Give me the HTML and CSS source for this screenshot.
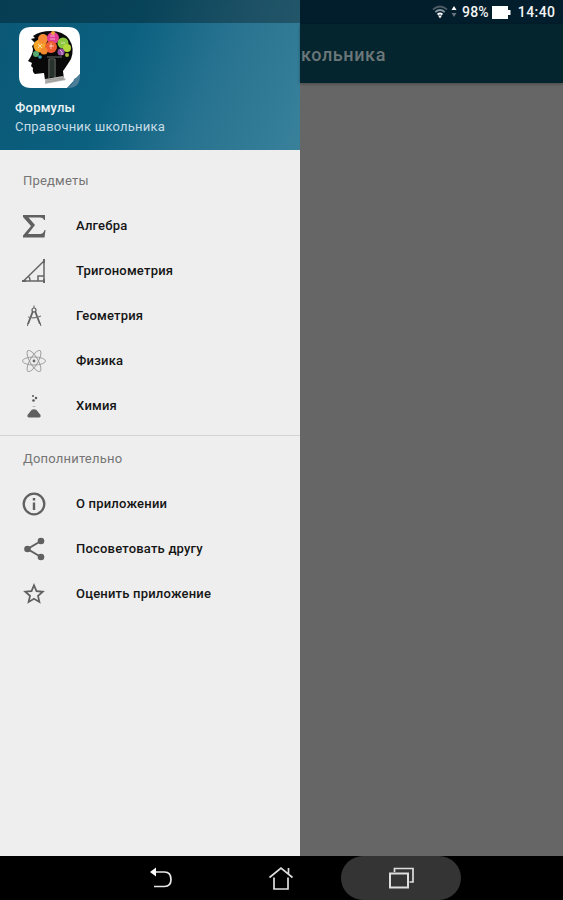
FILE: index.html
```html
<!DOCTYPE html>
<html lang="ru">
<head>
  <meta charset="utf-8">
  <title>Формулы</title>
  <link rel="stylesheet" href="styles.css">
</head>
<body>

<div class="screen">
  <div class="drawer">
    <div class="header">
      <div class="shade"></div>
      <svg class="logo" width="64" height="64" viewBox="0 0 64 64">
        <path d="M13 1H50Q62 1 62 13V48L49 62H13Q1 62 1 50V13Q1 1 13 1Z" fill="#fff"/>
        <path d="M62 48V50Q62 62 50 62L49 62Q55 59 56 53Q59 52 62 48Z" fill="#4c7d99"/>
        <path d="M15 15L13 13L17 12L15 10Q22 5 33 5Q45 5 51 13Q57 22 53 33Q48 41 45 45L46 54H27L26 47L17 48Q14 46 15 42L13 40L14 37L10 35Q15 28 15 23L14 20L17 17Z" fill="#080908"/>
        <g>
          <circle cx="22" cy="20" r="6.5" fill="#f5a52a"/>
          <circle cx="25" cy="13" r="5" fill="#f58b35"/>
          <circle cx="35" cy="12" r="6" fill="#e43c94"/>
          <circle cx="45" cy="17" r="5.5" fill="#8dc63f"/>
          <circle cx="33" cy="21" r="6" fill="#ee5c32"/>
          <circle cx="49" cy="22" r="4" fill="#b5d83b"/>
          <circle cx="18" cy="28" r="3" fill="#56aa70"/>
          <circle cx="26" cy="25" r="3.500" fill="#ef8a2e"/>
          <circle cx="43" cy="26" r="3.500" fill="#974ba0"/>
          <circle cx="35" cy="7" r="2" fill="#f0a441"/>
          <circle cx="49" cy="29" r="2" fill="#a8b83a"/>
          <circle cx="22" cy="31" r="1.800" fill="#3aa1b4"/>
          <path d="M32 10h5M32 13h5M20 18l4 4M24 18l-4 4M31 20h5M33 17v6M43 17h4M42 24l2 2v3" stroke="#fff" stroke-width="1" opacity=".6" fill="none"/>
        </g>
        <path d="M29 31H44M31 33V52M37 33V52M31 33H37" stroke="#687069" stroke-width="1.200" fill="none"/>
        <path d="M32 34h4v17h-4z" fill="#28332c"/>
        <path d="M27 53L45 50L48 54L27 58Z" fill="#b5b5b3"/>
        <path d="M29 54L45 52M28 56L46 53" stroke="#888" stroke-width=".6"/>
      </svg>
      <div class="name">Формулы</div>
      <div class="tagline">Справочник школьника</div>
    </div>

    <div class="section">
      <h2>Предметы</h2>
      <div class="item">
        <svg class="icon" viewBox="0 0 24 24"><path d="M1 1H23V6H22Q21.500 3.500 18 3.500H6.500L13 11L6 20H18Q21.500 20 22.500 16H23.500L22.500 23.500H1V21.500L9 12L1 3Z" fill="#606060"/></svg>
        <span>Алгебра</span>
      </div>
      <div class="item">
        <svg class="icon" viewBox="0 0 24 24"><path d="M1.500 22L22 2V22ZM8 22Q8 18 6 17.500M16 22V17H22" fill="none" stroke="#666" stroke-width="1.500"/><path d="M21 0h2v4h-2zM21 20h2v4h-2zM0 21h4v2H0z" fill="#666"/></svg>
        <span>Тригонометрия</span>
      </div>
      <div class="item">
        <svg class="icon" viewBox="0 0 24 24"><path d="M11 7L6 20M13 7L18 20" stroke="#606060" stroke-width="1.800" fill="none"/><path d="M6 13Q12 15 19 12M12 1.500V5" stroke="#777" stroke-width="1.200" fill="none"/><circle cx="12" cy="6" r="2" fill="#eee" stroke="#606060" stroke-width="1.200"/><path d="M6 19L5.500 22M18 19L19 22" stroke="#666"/></svg>
        <span>Геометрия</span>
      </div>
      <div class="item">
        <svg class="icon" viewBox="0 0 24 24"><g fill="none" stroke="#999" stroke-width=".9"><ellipse cx="12" cy="12" rx="11.500" ry="4"/><ellipse cx="12" cy="12" rx="12" ry="4" transform="rotate(60 12 12)"/><ellipse cx="12" cy="12" rx="12" ry="4" transform="rotate(120 12 12)"/></g><circle cx="12" cy="12" r="1.400" fill="#666"/></svg>
        <span>Физика</span>
      </div>
      <div class="item">
        <svg class="icon" viewBox="0 0 24 24"><path d="M9.500 16Q12 14.500 14.500 16L18.500 21Q19 23.500 17 23.500H7Q5 23.500 5.500 21Z" fill="#606060"/><path d="M10.500 12.500H13.500" stroke="#bbb"/><circle cx="11" cy="2" r="1" fill="#555"/><circle cx="14" cy="4" r="1.200" fill="#555"/><circle cx="11.500" cy="6.500" r="1.300" fill="#555"/></svg>
        <span>Химия</span>
      </div>
    </div>

    <div class="section extra">
      <h2>Дополнительно</h2>
      <div class="item">
        <svg class="icon" viewBox="0 0 24 24"><circle cx="12" cy="12" r="10.300" fill="none" stroke="#606060" stroke-width="2.300"/><path d="M10.800 6h2.400v2.400h-2.400zM10.800 10.500h2.400v7.500h-2.400z" fill="#606060"/></svg>
        <span>О приложении</span>
      </div>
      <div class="item">
        <svg class="icon" viewBox="0 0 24 24"><path d="M19 4L5.500 12L19 20" fill="none" stroke="#606060" stroke-width="2"/><g fill="#606060"><circle cx="19" cy="4" r="3.300"/><circle cx="5.500" cy="12" r="3.300"/><circle cx="19" cy="20" r="3.300"/></g></svg>
        <span>Посоветовать другу</span>
      </div>
      <div class="item">
        <svg class="icon" viewBox="1 1 22 22"><path d="M22 9.240l-7.190-.620L12 2 9.190 8.630 2 9.240l5.460 4.730L5.820 21 12 17.270 18.180 21l-1.630-7.030L22 9.240zM12 15.400l-3.760 2.270 1-4.280-3.320-2.880 4.380-.380L12 6.100l1.710 4.040 4.380.380-3.320 2.880 1 4.280L12 15.400z" fill="#606060"/></svg>
        <span>Оценить приложение</span>
      </div>
    </div>
  </div>

  <div class="page">
    <div class="status">
      <svg width="26" height="16" viewBox="0 0 26 16">
        <g fill="none" stroke-width="1.700"><path d="M1 5.500Q8 -.500 15 5.500" stroke="#4d5a66"/><path d="M3.300 8Q8 4 12.700 8" stroke="#8795a0"/><path d="M5.500 10.500Q8 8.500 10.500 10.500" stroke="#fff"/></g>
        <path d="M6 11.500H10L8 14.500Z" fill="#fff"/>
        <path d="M19.500 6L22 2L24.500 6Z" fill="#fff"/>
        <path d="M19.500 9H24.500L22 13Z" fill="#66737d"/>
      </svg>
      <span class="percent">98%</span>
      <svg class="battery" width="19" height="13" viewBox="0 0 19 13"><path d="M0 0H16V4H18.500V9H16V13H0Z" fill="#fff"/></svg>
      <span class="clock">14:40</span>
    </div>
    <div class="toolbar"><span>кольника</span></div>
  </div>
</div>

<div class="navbar">
  <div class="key">
    <svg width="24" height="24" viewBox="0 0 24 24"><path d="M5 6H15.500Q22 6 22 13.500Q22 20.500 15.500 20.500H5" fill="none" stroke="#e8e8e8" stroke-width="1.700"/><path d="M1 6L7 1.500V10.500Z" fill="#fff"/></svg>
  </div>
  <div class="key">
    <svg width="26" height="26" viewBox="0 0 26 26"><path d="M1.500 12.500L13 3L24.500 12.500M20.500 9V3M6 12.500V24H20V12.500" fill="none" stroke="#dedede" stroke-width="1.700"/></svg>
  </div>
  <div class="key active">
    <svg width="26" height="24" viewBox="0 0 26 24"><path d="M2 7.500H20V21.500H2Z" fill="none" stroke="#dedede" stroke-width="2"/><path d="M6.500 6V2.500H25V16H21.500" fill="none" stroke="#dedede" stroke-width="1.700"/></svg>
  </div>
</div>

</body>
</html>
```
FILE: styles.css
```css
body {
  margin: 0;
  height: 900px;
  overflow: hidden;
  background: #000;
  font-family: Roboto, sans-serif;
  font-size: 13px;
  letter-spacing: 0.2px;
}
.screen {
  display: flex;
  height: 856px;
}
.drawer {
  width: 300px;
  background: #eee;
}
.header {
  height: 150px;
  background: linear-gradient(112deg, #0b5876 0%, #0b6080 40%, #287390 68%, #39819b 100%);
  color: #e9f3f6;
}
.shade {
  height: 23px;
  background: rgba(0, 0, 0, 0.3);
}
.logo {
  display: block;
  margin: 3px 0 0 18px;
}
.name, .tagline {
  width: max-content;
  margin-left: 15px;
  line-height: 19px;
}
.name {
  margin-top: 8px;
  font-weight: 500;
}
.tagline {
  color: #c7dde5;
}
.section h2 {
  width: max-content;
  margin: 0 0 0 23px;
  padding: 21px 0 12px;
  font-size: 13px;
  font-weight: 400;
  line-height: 20px;
  color: #757575;
}
.extra {
  margin-top: 7px;
  border-top: 1px solid #d4d4d4;
}
.extra h2 {
  padding: 13px 0 12px;
}
.item {
  display: flex;
  align-items: center;
  height: 45px;
  padding-left: 22px;
  font-weight: 500;
  color: #151515;
}
.icon {
  width: 24px;
  height: 24px;
  margin-right: 30px;
}
.page {
  flex: 1;
  background: #666;
}
.status {
  display: flex;
  align-items: center;
  height: 24px;
  padding-left: 132px;
  background: #021d2c;
  color: #f4f4f4;
  font-size: 14px;
  font-weight: 500;
}
.percent {
  margin-left: 4px;
}
.battery {
  margin: 0 7px 0 3px;
}
.clock {
  letter-spacing: 0.4px;
}
.toolbar {
  height: 59px;
  padding-left: 1px;
  background: #04252e;
  box-shadow: 0 1px 3px rgba(0, 0, 0, 0.3);
  color: #6c7779;
  font-size: 18px;
  font-weight: 500;
  letter-spacing: 0.6px;
  line-height: 61px;
}
.navbar {
  display: flex;
  justify-content: center;
  height: 44px;
  margin-right: 1px;
}
.key {
  display: flex;
  align-items: center;
  justify-content: center;
  width: 120px;
}
.active {
  border-radius: 22px;
  background: #343434;
}
```
